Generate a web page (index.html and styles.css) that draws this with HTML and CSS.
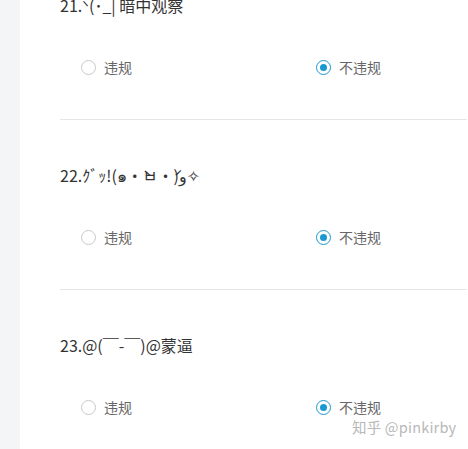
FILE: index.html
```html
<!DOCTYPE html>
<html lang="zh">
<head>
<meta charset="utf-8">
<link rel="stylesheet" href="styles.css">
</head>
<body>
<div class="page">
  <aside class="side"></aside>
  <main class="main">
    <div class="list">
      <section class="item">
        <div class="title">21.ᐠ(･_| 暗中观察</div>
        <div class="options">
          <label class="opt"><span class="radio"></span><span class="lbl">违规</span></label>
          <label class="opt"><span class="radio on"></span><span class="lbl">不违规</span></label>
        </div>
      </section>
      <section class="item">
        <div class="title">22.ｸﾞｯ!(๑•̀ㅂ•́)و✧</div>
        <div class="options">
          <label class="opt"><span class="radio"></span><span class="lbl">违规</span></label>
          <label class="opt"><span class="radio on"></span><span class="lbl">不违规</span></label>
        </div>
      </section>
      <section class="item">
        <div class="title">23.@(￣-￣)@蒙逼</div>
        <div class="options">
          <label class="opt"><span class="radio"></span><span class="lbl">违规</span></label>
          <label class="opt"><span class="radio on"></span><span class="lbl">不违规</span></label>
        </div>
      </section>
    </div>
  </main>
  <div class="watermark">知乎 @pinkirby</div>
</div>
</body>
</html>
```
FILE: styles.css
```css
html, body {
  margin: 0;
  padding: 0;
  background: #fff;
  overflow: hidden;
}
body {
  font-family: "Noto Sans CJK SC", "Noto Sans", "DejaVu Sans", sans-serif;
}
.page {
  display: flex;
  width: 468px;
  height: 449px;
  position: relative;
  overflow: hidden;
}
.side {
  width: 20px;
  flex: none;
  background: #f4f5f7;
}
.main {
  flex: 1;
  padding-left: 40px;
  padding-right: 1px;
}
.list {
  margin-top: -50px;
}
.item {
  padding: 43px 0 42px;
  border-bottom: 1px solid #e6e6e6;
}
.title {
  font-size: 16px;
  line-height: 24px;
  color: #333;
  white-space: nowrap;
}
.options {
  margin-top: 40px;
  padding-left: 21px;
  display: grid;
  grid-template-columns: 235px auto;
  height: 20px;
  align-items: center;
}
.opt {
  display: flex;
  align-items: center;
  gap: 8px;
  font-size: 14px;
  color: #666;
}
.radio {
  box-sizing: border-box;
  width: 15px;
  height: 15px;
  border-radius: 50%;
  border: 1px solid #c9c9c9;
  display: flex;
  align-items: center;
  justify-content: center;
}
.radio.on {
  border-color: #1a98d0;
}
.radio.on::after {
  content: "";
  width: 7px;
  height: 7px;
  border-radius: 50%;
  background: #1a98d0;
}
.lbl {
  line-height: 20px;
}
.watermark {
  position: absolute;
  left: 352px;
  top: 417px;
  font-size: 14.5px;
  line-height: 20px;
  color: #b8b8b8;
  letter-spacing: 0.2px;
}
```
